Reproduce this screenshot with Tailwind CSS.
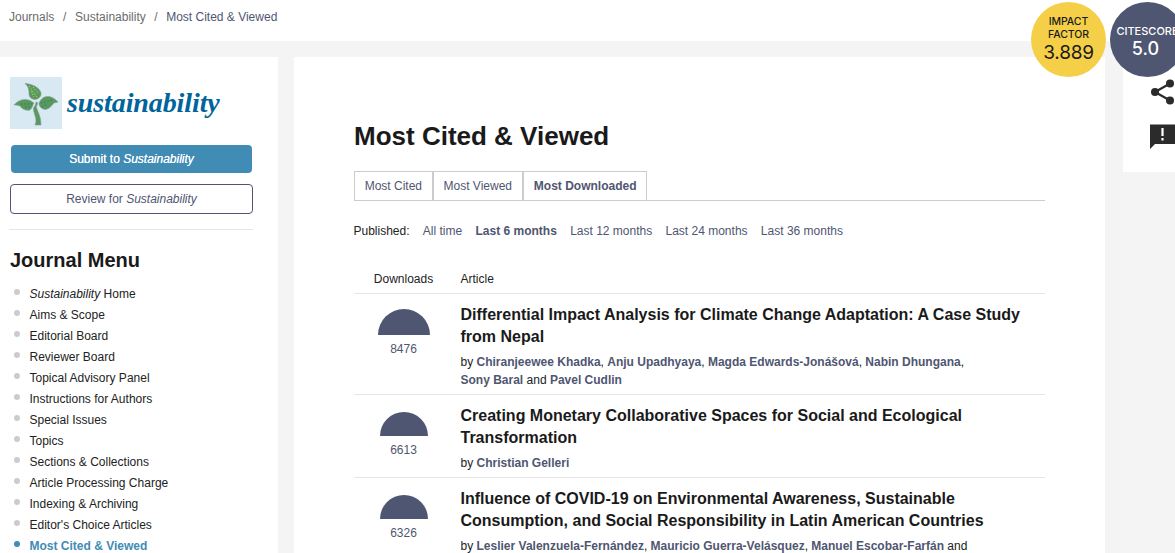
<!DOCTYPE html>
<html lang="en">
<head>
    <meta charset="UTF-8">
    <meta name="viewport" content="width=device-width, initial-scale=1.0">
    <title>Sustainability | Most Cited &amp; Viewed</title>
    <script src="https://cdn.jsdelivr.net/npm/@tailwindcss/browser@4"></script>
</head>
<body class="relative h-screen overflow-hidden bg-[#f4f4f4] font-['Liberation_Sans',Arial,sans-serif] text-xs text-[#222]">

    <!-- Breadcrumb -->
    <header class="flex h-[41px] items-start bg-white pl-[9px] pt-[9px] leading-4 text-[#6b6b6b]">
        <a href="#">Journals</a>
        <span class="px-[8.7px]">/</span>
        <a href="#">Sustainability</a>
        <span class="px-[8.5px]">/</span>
        <span class="text-[#4f5671]">Most Cited &amp; Viewed</span>
    </header>

    <div class="mt-4 flex items-start">
        <!-- Sidebar -->
        <aside class="h-[496px] w-[278px] shrink-0 overflow-hidden bg-white pl-[10px] pr-[25px] pt-5">
            <a href="#" class="flex h-[52px] items-center gap-[5px]">
                <svg class="h-[52px] w-[52px] shrink-0" viewBox="0 0 52 52">
                    <rect width="52" height="52" fill="#d9e9f3"/>
                    <g fill="#579a5c" stroke="#8b9a9c" stroke-width=".6">
                        <path d="M15 6.500C23 7 30 11 31 16C31.500 19 29 22 25 22.500C20 22 19 19 19 16C19 12 18 9 15 6.500Z"/>
                        <path d="M4 28C9 22 17 20 24 26C23 27 23 30 20 33C16 34 12 32 10 29C8 28 6 28 4 28Z"/>
                        <path d="M48 25C42 18 33 17 29 26C29 30 32 32 35 32.500C40 32 42 28 44 26Z"/>
                        <path d="M26 25C28 25 28 27 26.500 29C26 33 31 37 31 48H25C28 42 23 36 23.500 31C25 29 26 27 26 25Z"/>
                    </g>
                    <path d="M19 9L27 20M23 10L29 17M21 14L24 20" fill="none" stroke="#b9d067" stroke-width="1" stroke-dasharray="1.500 1.500"/>
                    <path d="M11 27L22 27M15 30L21 30M31 26L42 23M32 30L38 27" fill="none" stroke="#2c6b8c" stroke-width="1" stroke-dasharray="1.200 2.200"/>
                </svg>
                <span class="font-['Liberation_Serif',serif] text-[28px] font-bold italic leading-8 tracking-[-0.1px] text-[#00659b]">sustainability</span>
            </a>

            <a href="#" class="mx-px mt-4 block h-7 rounded-[4px] bg-[#418cb4] text-center leading-7 text-white [text-shadow:0_0_0.5px_#fff]">Submit to <em>Sustainability</em></a>
            <a href="#" class="mt-[11px] block h-[30px] rounded-[4px] border border-[#4f5671] text-center leading-7 text-[#4f5671]">Review for <em>Sustainability</em></a>

            <h2 class="-ml-px mt-[15px] border-t border-[#e6e6e6] pl-px pt-[18px] text-xl font-bold leading-6 text-[#1a1a1a]">Journal Menu</h2>

            <ul class="mt-3 leading-[21px]">
                <li class="flex items-start gap-[9.5px] pl-1"><i class="mt-[5px] size-[6px] rounded-full bg-[#ccc]"></i><a href="#"><em>Sustainability</em> Home</a></li>
                <li class="flex items-start gap-[9.5px] pl-1"><i class="mt-[5px] size-[6px] rounded-full bg-[#ccc]"></i><a href="#">Aims &amp; Scope</a></li>
                <li class="flex items-start gap-[9.5px] pl-1"><i class="mt-[5px] size-[6px] rounded-full bg-[#ccc]"></i><a href="#">Editorial Board</a></li>
                <li class="flex items-start gap-[9.5px] pl-1"><i class="mt-[5px] size-[6px] rounded-full bg-[#ccc]"></i><a href="#">Reviewer Board</a></li>
                <li class="flex items-start gap-[9.5px] pl-1"><i class="mt-[5px] size-[6px] rounded-full bg-[#ccc]"></i><a href="#">Topical Advisory Panel</a></li>
                <li class="flex items-start gap-[9.5px] pl-1"><i class="mt-[5px] size-[6px] rounded-full bg-[#ccc]"></i><a href="#">Instructions for Authors</a></li>
                <li class="flex items-start gap-[9.5px] pl-1"><i class="mt-[5px] size-[6px] rounded-full bg-[#ccc]"></i><a href="#">Special Issues</a></li>
                <li class="flex items-start gap-[9.5px] pl-1"><i class="mt-[5px] size-[6px] rounded-full bg-[#ccc]"></i><a href="#">Topics</a></li>
                <li class="flex items-start gap-[9.5px] pl-1"><i class="mt-[5px] size-[6px] rounded-full bg-[#ccc]"></i><a href="#">Sections &amp; Collections</a></li>
                <li class="flex items-start gap-[9.5px] pl-1"><i class="mt-[5px] size-[6px] rounded-full bg-[#ccc]"></i><a href="#">Article Processing Charge</a></li>
                <li class="flex items-start gap-[9.5px] pl-1"><i class="mt-[5px] size-[6px] rounded-full bg-[#ccc]"></i><a href="#">Indexing &amp; Archiving</a></li>
                <li class="flex items-start gap-[9.5px] pl-1"><i class="mt-[5px] size-[6px] rounded-full bg-[#ccc]"></i><a href="#">Editor's Choice Articles</a></li>
                <li class="flex items-start gap-[9.5px] pl-1 font-bold text-[#418cb4]"><i class="mt-[5px] size-[6px] rounded-full bg-[#418cb4]"></i><a href="#">Most Cited &amp; Viewed</a></li>
            </ul>
        </aside>

        <!-- Main content -->
        <main class="ml-4 h-[496px] w-[811px] shrink-0 overflow-hidden bg-white px-[60px] pt-16">
            <h1 class="text-[26px] font-bold leading-[30px] text-[#1a1a1a]">Most Cited &amp; Viewed</h1>

            <nav class="mt-5 flex h-[30px] border-b border-[#ccc] leading-7 text-[#4f5671]">
                <a href="#" class="border border-b-0 border-[#ccc] px-[9.7px]">Most Cited</a>
                <a href="#" class="border border-b-0 border-[#ccc] px-[9.8px]">Most Viewed</a>
                <a href="#" class="border border-b-0 border-[#ccc] px-[10px] font-bold">Most Downloaded</a>
            </nav>

            <div class="-ml-[0.5px] mt-[22px] flex gap-[13.3px] leading-4 text-[#4f5671]">
                <span class="text-[#222]">Published:</span>
                <a href="#">All time</a>
                <a href="#" class="font-bold">Last 6 months</a>
                <a href="#">Last 12 months</a>
                <a href="#">Last 24 months</a>
                <a href="#">Last 36 months</a>
            </div>

            <div class="mt-8 flex h-[23px] border-b border-[#e6e6e6] leading-4">
                <span class="w-[100px] pr-px text-center">Downloads</span>
                <span class="ml-[6.5px]">Article</span>
            </div>

            <article class="flex gap-[6.5px] border-b border-[#e6e6e6] pb-[5px] pt-[10px]">
                <div class="flex w-[100px] flex-col items-center pt-[5px] text-[#4f5671]">
                    <div class="h-[26px] w-[52px] rounded-t-full bg-[#4f5671]"></div>
                    <span class="mt-[6px] pr-px leading-4">8476</span>
                </div>
                <div class="flex-1">
                    <h3 class="text-base font-bold leading-[22px] text-[#1a1a1a]">Differential Impact Analysis for Climate Change Adaptation: A Case Study<br>from Nepal</h3>
                    <p class="mt-[5px] leading-[18px]">by <b class="text-[#4f5671]">Chiranjeewee Khadka</b>, <b class="text-[#4f5671]">Anju Upadhyaya</b>, <b class="text-[#4f5671]">Magda Edwards-Jonášová</b>, <b class="text-[#4f5671]">Nabin Dhungana</b>,<br><b class="text-[#4f5671]">Sony Baral</b> and <b class="text-[#4f5671]">Pavel Cudlin</b></p>
                </div>
            </article>

            <article class="flex gap-[6.5px] border-b border-[#e6e6e6] pb-[5px] pt-[10px]">
                <div class="flex w-[100px] flex-col items-center pt-[7px] text-[#4f5671]">
                    <div class="h-6 w-12 rounded-t-full bg-[#4f5671]"></div>
                    <span class="mt-[6px] pr-px leading-4">6613</span>
                </div>
                <div class="flex-1">
                    <h3 class="text-base font-bold leading-[22px] text-[#1a1a1a]">Creating Monetary Collaborative Spaces for Social and Ecological<br>Transformation</h3>
                    <p class="mt-[5px] leading-[18px]">by <b class="text-[#4f5671]">Christian Gelleri</b></p>
                </div>
            </article>

            <article class="flex gap-[6.5px] pt-[10px]">
                <div class="flex w-[100px] flex-col items-center pt-[7px] text-[#4f5671]">
                    <div class="h-6 w-12 rounded-t-full bg-[#4f5671]"></div>
                    <span class="mt-[6px] pr-px leading-4">6326</span>
                </div>
                <div class="flex-1">
                    <h3 class="text-base font-bold leading-[22px] text-[#1a1a1a]">Influence of COVID-19 on Environmental Awareness, Sustainable<br>Consumption, and Social Responsibility in Latin American Countries</h3>
                    <p class="mt-[5px] leading-[18px]">by <b class="text-[#4f5671]">Leslier Valenzuela-Fernández</b>, <b class="text-[#4f5671]">Mauricio Guerra-Velásquez</b>, <b class="text-[#4f5671]">Manuel Escobar-Farfán</b> and</p>
                </div>
            </article>
        </main>

        <!-- Share / feedback tools -->
        <aside class="ml-[18px] flex h-[115px] w-[52px] shrink-0 flex-col overflow-hidden bg-white pl-[27px] pt-[22px] text-[#2b2b2b]">
            <svg class="h-[26px] w-[26px] shrink-0" viewBox="0 0 26 26" fill="currentColor">
                <path d="M20 4.500L5 13L20 21.500" fill="none" stroke="currentColor" stroke-width="2.200"/>
                <circle cx="20" cy="4.500" r="4"/><circle cx="5" cy="13" r="4"/><circle cx="20" cy="21.500" r="4"/>
            </svg>
            <svg class="mt-[19px] h-[26px] w-[26px] shrink-0" viewBox="0 0 26 26">
                <path d="M0 .500H26V20H5L0 25Z" fill="currentColor"/>
                <path d="M12.500 4V12M12.500 14V16.500" stroke="#fff" stroke-width="2.200"/>
            </svg>
        </aside>
    </div>

    <!-- Metric badges -->
    <div class="absolute left-[1031px] top-[2px] flex gap-1 text-center font-['Inter',sans-serif]">
        <div class="flex size-[75px] shrink-0 flex-col items-center rounded-full bg-[#f5cf47] pt-[14px] text-[#1a1a1a]">
            <span class="text-[10.5px] font-medium leading-[12.5px] tracking-[-0.1px]">IMPACT<br>FACTOR</span>
            <span class="text-[19px] leading-[23px] tracking-[-0.2px]">3.889</span>
        </div>
        <div class="flex size-[75px] shrink-0 flex-col items-center rounded-full bg-[#4f5671] pt-[22px] text-white">
            <span class="text-[11px] font-medium leading-[14px]">CITESCORE</span>
            <span class="pr-1 text-[18px] font-medium leading-[22px]">5.0</span>
        </div>
    </div>
</body>
</html>
